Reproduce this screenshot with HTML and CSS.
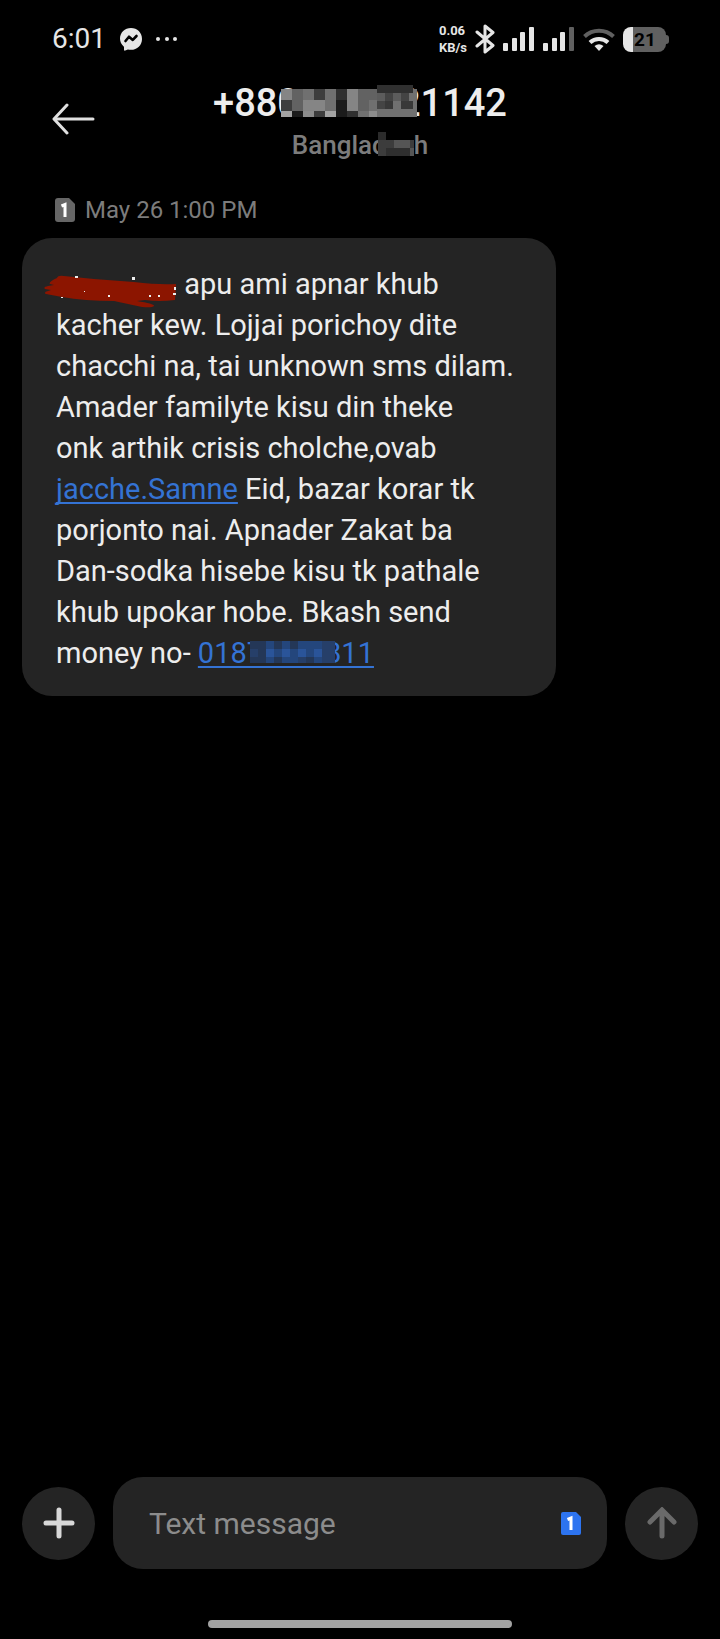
FILE: index.html
```html
<!DOCTYPE html>
<html lang="en">
<head>
    <meta charset="utf-8">
    <meta name="viewport" content="width=device-width, initial-scale=1.0">
    <title>Messages</title>
    <link rel="stylesheet" href="styles.css">
</head>
<body>
    <div class="status-bar">
        <div class="status-left">
            <span class="clock">6:01</span>
            <svg width="22" height="23" viewBox="0 0 22 23">
                <path fill="#e6e6e6" d="M11 0C4.800 0 0 4.600 0 10.600c0 3.200 1.400 6 3.700 7.900.2.200.3.400.3.700v2.600c0 .7.700 1.100 1.300.8l2.600-1.200c1 .3 2 .4 3.100.4 6.200 0 11-4.600 11-10.900S17.200 0 11 0z"/>
                <path fill="none" stroke="#000" stroke-width="2.600" stroke-linejoin="round" stroke-linecap="round" d="M5.500 13l3.500-4.300 3.800 3.200L16.500 8"/>
            </svg>
            <svg width="22" height="6" viewBox="0 0 22 6" fill="#e6e6e6">
                <circle cx="2" cy="3" r="2"/>
                <circle cx="11" cy="3" r="2"/>
                <circle cx="19" cy="3" r="2"/>
            </svg>
        </div>
        <div class="status-right">
            <span class="speed">0.06<br>KB/s</span>
            <svg width="20" height="30" viewBox="0 0 20 30">
                <path fill="none" stroke="#e6e6e6" stroke-width="3" stroke-linejoin="round" stroke-linecap="round" d="M2 8l16 13.500-8 6.500V2l8 6.500L2 22"/>
            </svg>
            <svg width="32" height="26" viewBox="0 0 32 26" fill="#e6e6e6">
                <rect x="0" y="17" width="5" height="8" rx="1"/>
                <rect x="9" y="12" width="5" height="13" rx="1"/>
                <rect x="17" y="6" width="5" height="19" rx="1"/>
                <rect x="26" y="1" width="5" height="24" rx="1"/>
            </svg>
            <svg width="32" height="26" viewBox="0 0 32 26" fill="#e6e6e6">
                <rect x="0" y="17" width="5" height="8" rx="1"/>
                <rect x="9" y="12" width="5" height="13" rx="1"/>
                <rect x="17" y="6" width="5" height="19" rx="1"/>
                <rect x="26" y="1" width="5" height="24" rx="1" fill="#606060"/>
            </svg>
            <svg width="32" height="25" viewBox="0 0 32 25" fill="none" stroke-width="4">
                <path stroke="#606060" d="M1.500 9.500a21 21 0 0 1 29 0"/>
                <path stroke="#e6e6e6" d="M7 15.500a13 13 0 0 1 18 0"/>
                <path fill="#e6e6e6" d="M11.500 19q4.500-3.600 9 0L16 24z"/>
            </svg>
            <span class="battery"><span class="battery-level">21</span></span>
        </div>
    </div>

    <header class="header">
        <button class="icon-button back" aria-label="Back">
            <svg width="44" height="32" viewBox="0 0 44 32" fill="none" stroke="#e0e0e0" stroke-width="3" stroke-linecap="round">
                <path d="M41 16H3"/>
                <path stroke-linejoin="round" d="M15 2L2 16l13 14"/>
            </svg>
        </button>
        <div class="contact">
            <h1 class="number">+880<svg class="mosaic mosaic--number" width="136" height="33" viewBox="0 0 136 33" shape-rendering="crispEdges">
                <path fill="#707070" d="M0 4h136v28H0z"/>
                <path fill="#858585" d="M0 4h11v11H0zM66 4h11v11H66zM22 15h22v11H22zM66 15h11v11H66z"/>
                <path fill="#626262" d="M11 4h11v11H11zM77 4h19v11H77zM11 15h11v11H11zM77 15h11v11H77z"/>
                <path fill="#3d3d3d" d="M33 4h11v11H33zM0 15h11v11H0zM33 26h11v6H33z"/>
                <path fill="#303030" d="M55 4h11v11H55zM66 26h11v6H66zM96 0h36v8H96z"/>
                <path fill="#1b1b1b" d="M55 15h11v11H55zM11 26h11v6H11zM55 26h11v6H55z"/>
                <path fill="#a3a3a3" d="M0 26h11v6H0zM44 26h11v6H44z"/>
                <path fill="#8c8c8c" d="M22 26h11v6H22zM88 26h8v6H88z"/>
                <path fill="#444" d="M104 8h8v8h-8zM120 8h8v8h-8zM96 16h8v8h-8z"/>
                <path fill="#5c5c5c" d="M96 8h8v8h-8zM112 8h8v8h-8z"/>
                <path fill="#383838" d="M104 16h8v8h-8zM120 16h12v8h-12z"/>
            </svg>21142</h1>
            <p class="country">Banglad<svg class="mosaic mosaic--country" width="36" height="24" viewBox="0 0 36 24" shape-rendering="crispEdges">
                <path fill="#2b2b2b" d="M0 0h8v8H0z"/>
                <path fill="#3c3c3c" d="M0 8h36v16H0z"/>
                <path fill="#555" d="M16 8h16v8H16zM32 16h4v8h-4z"/>
                <path fill="#2e2e2e" d="M8 16h24v8H8z"/>
            </svg>h</p>
        </div>
    </header>

    <main class="thread">
        <div class="stamp">
            <svg width="20" height="24" viewBox="0 0 20 24">
                <path fill="#666" d="M3 0h11l6 6v15a3 3 0 0 1-3 3H3a3 3 0 0 1-3-3V3a3 3 0 0 1 3-3z"/>
                <path fill="none" stroke="#fff" stroke-width="3" d="M6.500 8l3.500-1.500V19"/>
            </svg>
            <time>May 26 1:00 PM</time>
        </div>
        <p class="bubble">
            <svg class="scribble" width="133" height="33" viewBox="0 0 133 33">
                <path fill="#8c1500" d="M13 3q1-3 7-2l30 3 40 3q25 3 42 2l-1 16q-16 2-30 0l-8 1q18 3 17 5-2 2-12 1L70 26q-30 0-52-4L2 19q-3-2 2-3l3-1-6-1q-2-2 3-3l6-1-4-1q-2-2 7-6z"/>
                <path fill="#eee" d="M31 1h3v2h-3zM88 2h3v3h-3zM64 20h2v2h-2zM105 20h2v2h-2zM114 20h2v2h-2zM130 12h2v3h-2zM129 18h3v2h-3zM40 16h1v1h-1zM17 22h2v1h-2z"/>
            </svg> apu ami apnar khub<br>
            kacher kew. Lojjai porichoy dite<br>
            chacchi na, tai unknown sms dilam.<br>
            Amader familyte kisu din theke<br>
            onk arthik crisis cholche,ovab<br>
            <a class="link" href="#">jacche.Samne</a> Eid, bazar korar tk<br>
            porjonto nai. Apnader Zakat ba<br>
            Dan-sodka hisebe kisu tk pathale<br>
            khub upokar hobe. Bkash send<br>
            money no- <a class="link" href="#">0187<svg class="mosaic mosaic--phone" width="85" height="27" viewBox="0 0 85 27" shape-rendering="crispEdges">
                <path fill="#24467c" d="M0 0h85v22H0z"/>
                <path fill="#243757" d="M0 0h16v22H0zM24 0h8v8h-8zM40 0h8v8h-8zM24 16h8v6h-8zM56 16h8v6h-8z"/>
                <path fill="#2a5499" d="M16 8h8v8h-8zM32 8h8v8h-8zM48 8h8v8h-8zM64 8h8v8h-8z"/>
                <path fill="#263f69" d="M0 8h8v8H0zM72 0h13v22H72zM48 16h8v6h-8z"/>
                <path fill="#3473d4" d="M0 25h85v2H0z"/>
            </svg>811</a>
        </p>
    </main>

    <form class="composer">
        <button class="round-button" type="button" aria-label="Add attachment">
            <svg width="32" height="32" viewBox="0 0 32 32" stroke="#d8d8d8" stroke-width="5" stroke-linecap="round">
                <path d="M16 3v26M3 16h26"/>
            </svg>
        </button>
        <div class="field">
            <input class="field-input" type="text" placeholder="Text message" aria-label="Text message">
            <svg width="20" height="23" viewBox="0 0 20 23">
                <path fill="#2d74f0" d="M2 0h13l5 5v16a2 2 0 0 1-2 2H2a2 2 0 0 1-2-2V2a2 2 0 0 1 2-2z"/>
                <path fill="none" stroke="#fff" stroke-width="3" d="M6.500 7.500L10 6V18"/>
            </svg>
        </div>
        <button class="round-button" type="submit" aria-label="Send">
            <svg width="30" height="32" viewBox="0 0 30 32" fill="none" stroke="#6a6a6a" stroke-width="5" stroke-linecap="round">
                <path d="M15 4v25M3 15L15 3l12 12"/>
            </svg>
        </button>
    </form>
    <div class="home-bar"></div>
</body>
</html>
```
FILE: styles.css
```css
:root {
    --ff: Roboto, 'Liberation Sans', sans-serif;
    --surface: #242424;
    --light: #e6e6e6;
    --muted: #7c7c7c;
    --accent: #3473d4;
}

* {
    box-sizing: border-box;
}

body {
    font-family: var(--ff);
    color: #ededed;
    background-color: #000;

    margin: 0;
    min-height: 100vh;

    display: flex;
    flex-direction: column;
}

h1,
p {
    margin: 0;
}

svg {
    flex: none;
}

/* Status bar */
.status-bar {
    padding: 20px 51px 0 52px;
    height: 78px;

    display: flex;
    justify-content: space-between;
    align-items: flex-start;
}
.status-left,
.status-right {
    height: 38px;

    display: flex;
    align-items: center;
}
.status-left {
    gap: 14px;
}
.status-right {
    gap: 8px;
}
.clock {
    font-size: 28px;
    line-height: 38px;
    color: var(--light);
}
.speed {
    font-size: 13px;
    font-weight: bold;
    line-height: 17px;
    color: var(--light);
}
.battery {
    border-radius: 8px;
    background: linear-gradient(to right, var(--light) 10px, #606060 10px);

    position: relative;
    width: 43px;
    height: 25px;
    margin-right: 3px;
}
.battery::after {
    content: '';
    border-radius: 0 3px 3px 0;
    background-color: #606060;

    position: absolute;
    top: 8px;
    right: -3px;
    width: 4px;
    height: 9px;
}
.battery-level {
    font-size: 19px;
    font-weight: bold;
    line-height: 25px;
    color: #000;

    display: block;
    padding-left: 11px;
}

/* Header */
.header {
    padding: 0 52px;
    height: 108px;

    display: grid;
    grid-template-columns: 44px 1fr 44px;
}
.icon-button {
    border: 0;
    background: none;

    padding: 0;
}
.back {
    height: 82px;

    display: flex;
    align-items: center;
}
.contact {
    text-align: center;
    white-space: nowrap;
}
.number {
    font-size: 38px;
    font-weight: 500;
    line-height: 50px;
}
.country {
    font-size: 26px;
    font-weight: 500;
    line-height: 34px;
    color: var(--muted);
}
.mosaic {
    position: relative;
}
.mosaic--number {
    vertical-align: -2px;
    margin: 0 -18px 0 -18px;
}
.mosaic--country {
    vertical-align: -2px;
    margin: 0 0 0 -9px;
}
.mosaic--phone {
    vertical-align: -5px;
    margin: 0 -10px 0 -13px;
}

/* Thread */
.thread {
    flex: 1;
    padding: 8px 22px;
}
.stamp {
    font-size: 24px;
    line-height: 32px;
    color: var(--muted);

    padding-left: 33px;
    margin-bottom: 12px;

    display: flex;
    align-items: center;
    gap: 10px;
}
.bubble {
    font-size: 29px;
    line-height: 41px;
    border-radius: 30px;
    background-color: var(--surface);

    width: 79%;
    padding: 26px 34px 22px;
    white-space: nowrap;
}
.scribble {
    vertical-align: -10px;
    margin: -4px 0 -4px -12px;
}
.link {
    color: var(--accent);
    text-decoration: underline;
    text-decoration-thickness: 2px;
    text-underline-offset: 3px;
    text-decoration-skip-ink: none;
}

/* Composer */
.composer {
    padding: 0 22px;

    display: flex;
    align-items: center;
    gap: 18px;
}
.round-button {
    border: 0;
    border-radius: 50%;
    background-color: var(--surface);

    flex: none;
    width: 73px;
    height: 73px;
    padding: 0;

    display: flex;
    justify-content: center;
    align-items: center;
}
.field {
    border-radius: 30px;
    background-color: var(--surface);

    flex: 1;
    height: 92px;
    padding: 0 26px 0 36px;

    display: flex;
    align-items: center;
}
.field-input {
    font-family: inherit;
    font-size: 30px;
    color: inherit;
    border: 0;
    outline: 0;
    background: none;

    flex: 1;
    min-width: 0;
    padding: 0;
}
.field-input::placeholder {
    color: #8c8c8c;
    opacity: 1;
}

.home-bar {
    border-radius: 4px;
    background-color: #a3a3a3;

    width: 304px;
    height: 8px;
    margin: 51px auto 11px;
}
```
